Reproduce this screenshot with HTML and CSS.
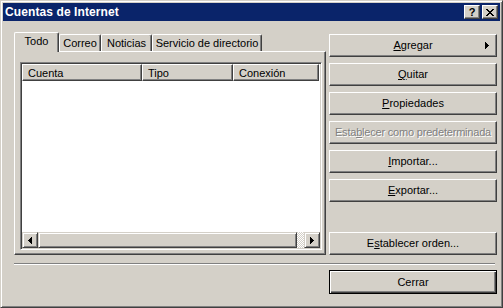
FILE: index.html
```html
<!DOCTYPE html>
<html lang="es">
<head>
    <meta charset="UTF-8" />
    <title>Cuentas de Internet</title>
    <link rel="stylesheet" href="styles.css">
</head>
<body>
    <div class="window">
        <div class="titlebar">
            <span class="title">Cuentas de Internet</span>
            <div class="caption-btns">
                <span class="cap-btn help">?</span>
                <span class="cap-btn">
                    <svg width="8" height="7" viewBox="0 0 8 7" shape-rendering="crispEdges">
                        <path d="M0 0h2v1h-2zM1 1h2v1h-2zM2 2h4v1h-4zM3 3h2v1h-2zM2 4h4v1h-4zM1 5h2v1h-2zM0 6h2v1h-2zM6 0h2v1h-2zM5 1h2v1h-2zM5 5h2v1h-2zM6 6h2v1h-2z" fill="#000"/>
                    </svg>
                </span>
            </div>
        </div>

        <div class="content">
            <div class="main">
                <div class="tabs-area">
                    <div class="tab-strip">
                        <div class="tab active tab-todo">Todo</div>
                        <div class="tab tab-correo">Correo</div>
                        <div class="tab tab-noticias">Noticias</div>
                        <div class="tab tab-servicio">Servicio de directorio</div>
                    </div>
                    <div class="tab-panel">
                        <div class="listview">
                            <div class="list-header">
                                <div class="col col-cuenta">Cuenta</div>
                                <div class="col col-tipo">Tipo</div>
                                <div class="col col-conexion">Conexión</div>
                            </div>
                            <div class="list-body"></div>
                            <div class="hscroll">
                                <div class="sb-btn">
                                    <svg width="4" height="7" viewBox="0 0 4 7" shape-rendering="crispEdges"><path d="M3 0h1v7h-1zM2 1h1v5h-1zM1 2h1v3h-1zM0 3h1v1h-1z" fill="#000"/></svg>
                                </div>
                                <div class="sb-thumb"></div>
                                <div class="sb-track"></div>
                                <div class="sb-btn">
                                    <svg width="4" height="7" viewBox="0 0 4 7" shape-rendering="crispEdges"><path d="M0 0h1v7h-1zM1 1h1v5h-1zM2 2h1v3h-1zM3 3h1v1h-1z" fill="#000"/></svg>
                                </div>
                            </div>
                        </div>
                    </div>
                </div>

                <div class="side-buttons">
                    <div class="btn btn-arrow">
                        <span><u>A</u>gregar</span>
                        <svg class="btn-tri" width="4" height="7" viewBox="0 0 4 7" shape-rendering="crispEdges"><path d="M0 0h1v7h-1zM1 1h1v5h-1zM2 2h1v3h-1zM3 3h1v1h-1z" fill="#000"/></svg>
                    </div>
                    <div class="btn"><span><u>Q</u>uitar</span></div>
                    <div class="btn"><span><u>P</u>ropiedades</span></div>
                    <div class="btn disabled"><span>Esta<u>b</u>lecer como predeterminada</span></div>
                    <div class="btn"><span><u>I</u>mportar...</span></div>
                    <div class="btn"><span><u>E</u>xportar...</span></div>
                    <div class="btn btn-last"><span>E<u>s</u>tablecer orden...</span></div>
                </div>
            </div>

            <div class="separator"></div>

            <div class="footer">
                <div class="btn btn-default"><span>Cerrar</span></div>
            </div>
        </div>
    </div>
</body>
</html>
```

FILE: styles.css
```css
body {
    margin: 0;
    padding: 0;
    font-family: 'Liberation Sans', Arial, sans-serif;
    font-size: 11px;
    color: #000;
    background: #d4d0c8;
}

.window {
    width: 503px;
    height: 308px;
    box-sizing: border-box;
    background: #d4d0c8;
    border: 1px solid;
    border-color: #d4d0c8 #404040 #404040 #d4d0c8;
    box-shadow: inset 1px 1px #fff, inset -1px -1px #808080;
    padding: 2px;
    display: flex;
    flex-direction: column;
}

/* title bar */
.titlebar {
    height: 18px;
    flex-shrink: 0;
    background: #0a246a;
    color: #fff;
    display: flex;
    align-items: center;
    padding: 0 2px;
}

.title {
    flex: 1;
    font-weight: bold;
    font-size: 12px;
    letter-spacing: 0.1px;
}

.caption-btns {
    display: flex;
    gap: 2px;
}

.cap-btn {
    width: 16px;
    height: 14px;
    box-sizing: border-box;
    background: #d4d0c8;
    border: 1px solid;
    border-color: #fff #404040 #404040 #fff;
    box-shadow: inset -1px -1px #808080;
    display: flex;
    align-items: center;
    justify-content: center;
    color: #000;
}

.cap-btn.help {
    font-weight: bold;
    font-size: 11px;
    line-height: 1;
}

/* content */
.content {
    padding: 11px 3px 0 11px;
}

.main {
    display: flex;
    gap: 3px;
    height: 223px;
}

.tabs-area {
    width: 312px;
    display: flex;
    flex-direction: column;
}

.tab-strip {
    height: 19px;
    display: flex;
    align-items: flex-end;
}

.tab {
    height: 17px;
    box-sizing: border-box;
    border-left: 1px solid #fff;
    border-top: 1px solid #fff;
    border-right: 1px solid #404040;
    box-shadow: inset -1px 0 #808080;
    border-radius: 2px 2px 0 0;
    display: flex;
    align-items: center;
    justify-content: center;
    padding-bottom: 1px;
}

.tab.active {
    height: 20px;
    margin-bottom: -1px;
    position: relative;
    z-index: 1;
    background: #d4d0c8;
    padding-bottom: 3px;
}

.tab-todo { width: 45px; }
.tab-correo { width: 42px; }
.tab-noticias { width: 51px; }
.tab-servicio { width: 110px; }

.tab-panel {
    height: 204px;
    box-sizing: border-box;
    border: 1px solid;
    border-color: #fff #404040 #404040 #fff;
    box-shadow: inset -1px -1px #808080;
    padding: 10px 3px 4px 5px;
}

/* list view */
.listview {
    width: 302px;
    height: 188px;
    box-sizing: border-box;
    background: #fff;
    border: 1px solid;
    border-color: #808080 #fff #fff #808080;
    box-shadow: inset 1px 1px #404040, inset -1px -1px #d4d0c8;
    padding: 1px;
    display: flex;
    flex-direction: column;
}

.list-header {
    height: 17px;
    display: flex;
    flex-shrink: 0;
}

.col {
    box-sizing: border-box;
    background: #d4d0c8;
    border: 1px solid;
    border-color: #fff #404040 #404040 #fff;
    box-shadow: inset -1px -1px #808080;
    padding-left: 5px;
    display: flex;
    align-items: center;
}

.col-cuenta { width: 120px; }
.col-tipo { width: 91px; }
.col-conexion { width: 86px; }

.list-body {
    flex: 1;
}

.hscroll {
    height: 16px;
    display: flex;
    flex-shrink: 0;
}

.sb-btn,
.sb-thumb {
    box-sizing: border-box;
    background: #d4d0c8;
    border: 1px solid;
    border-color: #d4d0c8 #404040 #404040 #d4d0c8;
    box-shadow: inset 1px 1px #fff, inset -1px -1px #808080;
}

.sb-btn {
    width: 16px;
    display: flex;
    align-items: center;
    justify-content: center;
}

.sb-thumb {
    width: 259px;
}

.sb-track {
    flex: 1;
    background: repeating-conic-gradient(#fff 0 25%, #d4d0c8 0 50%) 0 0 / 2px 2px;
}

/* buttons */
.side-buttons {
    width: 168px;
    display: flex;
    flex-direction: column;
    gap: 6px;
    padding-top: 2px;
}

.btn {
    height: 23px;
    flex-shrink: 0;
    box-sizing: border-box;
    background: #d4d0c8;
    border: 1px solid;
    border-color: #fff #404040 #404040 #fff;
    box-shadow: inset -1px -1px #808080;
    display: flex;
    align-items: center;
    justify-content: center;
    position: relative;
    padding-bottom: 1px;
}

.btn u {
    text-decoration: underline;
    text-underline-offset: 1px;
}

.btn-tri {
    position: absolute;
    right: 7px;
    top: 7px;
}

.btn.disabled {
    color: #808080;
    text-shadow: 1px 1px #fff;
    letter-spacing: -0.2px;
}

.btn-last {
    margin-top: auto;
}

.separator {
    width: 481px;
    height: 0;
    margin-top: 8px;
    border-top: 1px solid #808080;
    border-bottom: 1px solid #fff;
}

.footer {
    display: flex;
    justify-content: flex-end;
    margin-top: 5px;
}

.btn-default {
    width: 168px;
    height: 24px;
    border: 1px solid #000;
    box-shadow: inset 1px 1px #fff, inset -1px -1px #404040, inset -2px -2px #808080;
}
```
